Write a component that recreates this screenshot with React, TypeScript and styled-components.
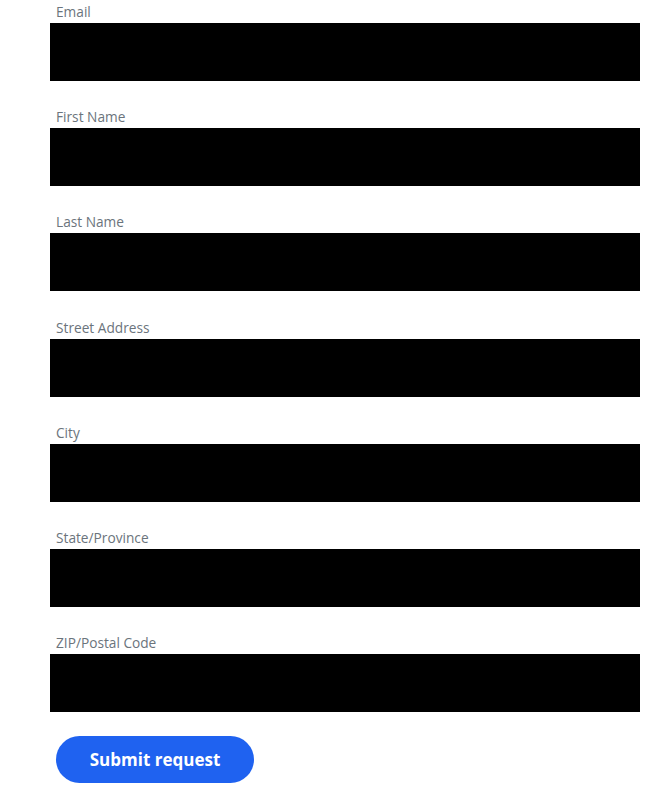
import React from "react";
import styled, { createGlobalStyle } from "styled-components";

const Global = createGlobalStyle`
  html, body { margin: 0; padding: 0; background: #ffffff; }
  * { box-sizing: border-box; }
`;

const Form = styled.form`
  display: flex;
  flex-direction: column;
  padding: 2px 12px 0 50px;
  font-family: "Open Sans", "Liberation Sans", sans-serif;
`;

const Group = styled.div`
  display: flex;
  flex-direction: column;
  margin-bottom: 26.2px;
`;

const Label = styled.label`
  display: block;
  padding-left: 6px;
  margin-bottom: 1px;
  font-size: 13.7px;
  line-height: 20px;
  color: #6b747c;
`;

const Field = styled.div`
  height: 58px;
  width: 590px;
  background: #000000;
`;

const Actions = styled.div`
  padding-left: 6px;
  margin-top: -2.2px;
`;

const Button = styled.button`
  width: 198px;
  height: 47px;
  border: none;
  border-radius: 24px;
  background: #1f62f0;
  color: #ffffff;
  font-family: "Open Sans", "Liberation Sans", sans-serif;
  font-weight: 700;
  font-size: 17px;
  cursor: pointer;
`;

const fields = [
  "Email",
  "First Name",
  "Last Name",
  "Street Address",
  "City",
  "State/Province",
  "ZIP/Postal Code",
];

export default function App() {
  return (
    <>
      <Global />
      <Form onSubmit={(e) => e.preventDefault()}>
        {fields.map((f) => (
          <Group key={f}>
            <Label>{f}</Label>
            <Field />
          </Group>
        ))}
        <Actions>
          <Button type="submit">Submit request</Button>
        </Actions>
      </Form>
    </>
  );
}
